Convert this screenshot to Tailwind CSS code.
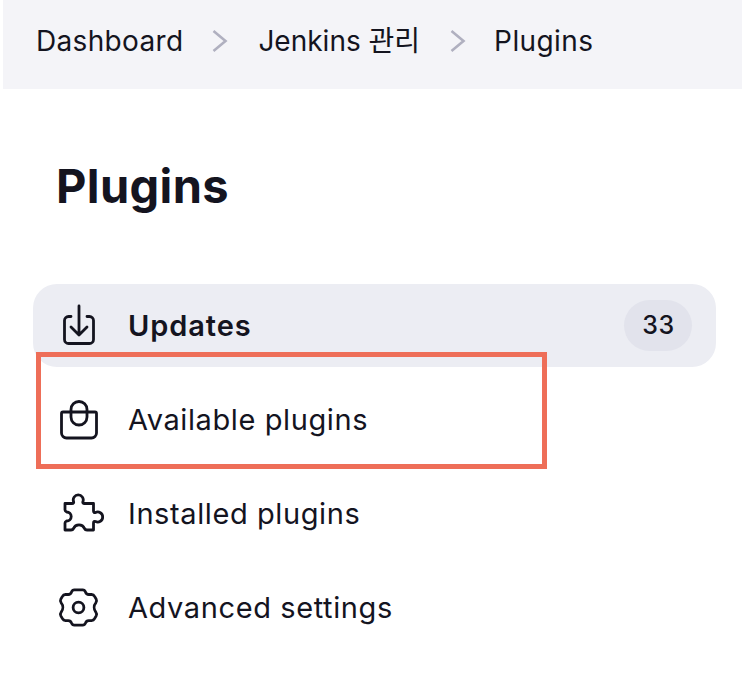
<!DOCTYPE html>
<html lang="ko">
<head>
    <meta charset="UTF-8">
    <title>Plugins</title>
    <script src="https://cdn.jsdelivr.net/npm/@tailwindcss/browser@4"></script>
</head>
<body class="bg-white h-[700px] overflow-hidden relative text-[#14141f] font-['Inter','Noto_Sans_CJK_KR',sans-serif]">
    <!-- Breadcrumb -->
    <nav class="ml-[3px] h-[89px] bg-[#f4f4f8] flex items-center pl-[33px] text-[28px] pb-[7px]">
        <span class="tracking-[0.33px]">Dashboard</span>
        <svg class="w-[18px] h-[24px] ml-[28px] mr-[29px]" viewBox="0 0 18 24" fill="none" stroke="#b0b0c0" stroke-width="2.6"><path d="M2.500 2l12 10-12 10"/></svg>
        <span>Jenkins 관리</span>
        <svg class="w-[18px] h-[24px] ml-[29px] mr-[27px]" viewBox="0 0 18 24" fill="none" stroke="#b0b0c0" stroke-width="2.6"><path d="M2.500 2l12 10-12 10"/></svg>
        <span class="tracking-[0.4px]">Plugins</span>
    </nav>

    <h1 class="ml-[56px] mt-[66px] text-[47px] leading-[62px] font-bold tracking-[0.35px]">Plugins</h1>

    <!-- Side menu -->
    <ul class="ml-[33px] mr-[26px] mt-[67px] flex flex-col gap-[11px] text-[29px] tracking-[0.6px]">
        <li class="h-[83px] rounded-[24px] bg-[#ecedf3] flex items-center pl-[23px] pr-[24px] font-semibold">
            <svg class="w-[50px] h-[48px] shrink-0" viewBox="0 0 50 48" fill="none" stroke="#14141f" stroke-width="2.800" stroke-linecap="round" stroke-linejoin="round"><path d="M15 14.500h-2.500a4 4 0 0 0-4 4v19a4 4 0 0 0 4 4h21a4 4 0 0 0 4-4v-19a4 4 0 0 0-4-4H31"/><path d="M23 4v29M15 25l8 8 8-8"/></svg>
            <span class="ml-[22px] tracking-[0.9px]">Updates</span>
            <span class="ml-auto w-[68px] h-[51px] pl-[1px] pt-[1px] rounded-full bg-[#e2e3ec] flex items-center justify-center text-[25px] font-medium tracking-[0.5px]">33</span>
        </li>
        <li class="h-[83px] flex items-center pl-[23px]">
            <svg class="w-[50px] h-[48px] shrink-0" viewBox="0 0 50 48" fill="none" stroke="#14141f" stroke-width="2.800" stroke-linecap="round" stroke-linejoin="round"><path d="M5.500 17.500a1.500 1.500 0 0 1 1.500-1.500h32a1.500 1.500 0 0 1 1.500 1.500V37a5 5 0 0 1-5 5h-25a5 5 0 0 1-5-5z"/><path d="M15 16v-2.500a8 8 0 0 1 16 0V16"/><path d="M15 16v5a8 8 0 0 0 16 0v-5"/></svg>
            <span class="ml-[22px]">Available plugins</span>
        </li>
        <li class="h-[83px] flex items-center pl-[23px]">
            <svg class="w-[50px] h-[48px] shrink-0" viewBox="0 0 50 48" fill="none" stroke="#14141f" stroke-width="2.800" stroke-linecap="round" stroke-linejoin="round"><path d="M9 13.500H16c1.500 0 2-1 1.500-2a5 5 0 1 1 9.500 0c-.5 1 0 2 1.500 2H37.500V21c0 1.500 1 2 2 1.500a5 5 0 1 1 0 9c-1-.5-2 0-2 1.500v7H31c-1.500 0-2-.5-2.500-1.500a6 6 0 0 0-11 0c-.5 1-1 1.500-2.500 1.500H9V33c0-1.200.7-1.500 1.700-2a4.500 4.500 0 0 0 0-9c-1-.5-1.700-1-1.700-2z"/></svg>
            <span class="ml-[22px]">Installed plugins</span>
        </li>
        <li class="h-[83px] flex items-center pl-[23px]">
            <svg class="w-[50px] h-[48px] shrink-0" viewBox="0 0 50 48" fill="none" stroke="#14141f" stroke-width="3" stroke-linecap="round" stroke-linejoin="round"><g transform="translate(22.500 23.500) scale(.93) translate(-22.500 -23.500)"><path d="M18 4.500H27C28.500 4.500 29.500 5.500 30 6.800C30.500 8.300 31.500 9.500 33.500 9.500H36.500C38 9.500 39 10 39.800 11.500L41.500 14.500C42.300 16 42.100 17.200 41.100 18.500C38.800 21.300 38.800 25.500 41.100 28.500C42.100 29.800 42.300 31 41.500 32.500L39.800 35.500C39 37 38 37.500 36.500 37.500H33.500C31.500 37.500 30.500 38.700 30 40.200C29.500 41.500 28.500 42.500 27 42.500H18C16.500 42.500 15.500 41.500 15 40.200C14.500 38.700 13.500 37.500 11.500 37.500H8.500C7 37.500 6 37 5.200 35.500L3.500 32.500C2.700 31 2.900 29.800 3.900 28.500C6.200 25.500 6.200 21.300 3.900 18.500C2.900 17.200 2.700 16 3.500 14.500L5.200 11.500C6 10 7 9.500 8.500 9.500H11.500C13.500 9.500 14.500 8.300 15 6.800C15.500 5.500 16.500 4.500 18 4.500Z"/><circle cx="22.500" cy="23.500" r="5.800"/></g></svg>
            <span class="ml-[22px]">Advanced settings</span>
        </li>
    </ul>

    <!-- Highlight box drawn over the screenshot -->
    <div class="absolute left-[36px] top-[352px] w-[511px] h-[117px] border-[5px] border-[#ee6e58]"></div>
</body>
</html>
